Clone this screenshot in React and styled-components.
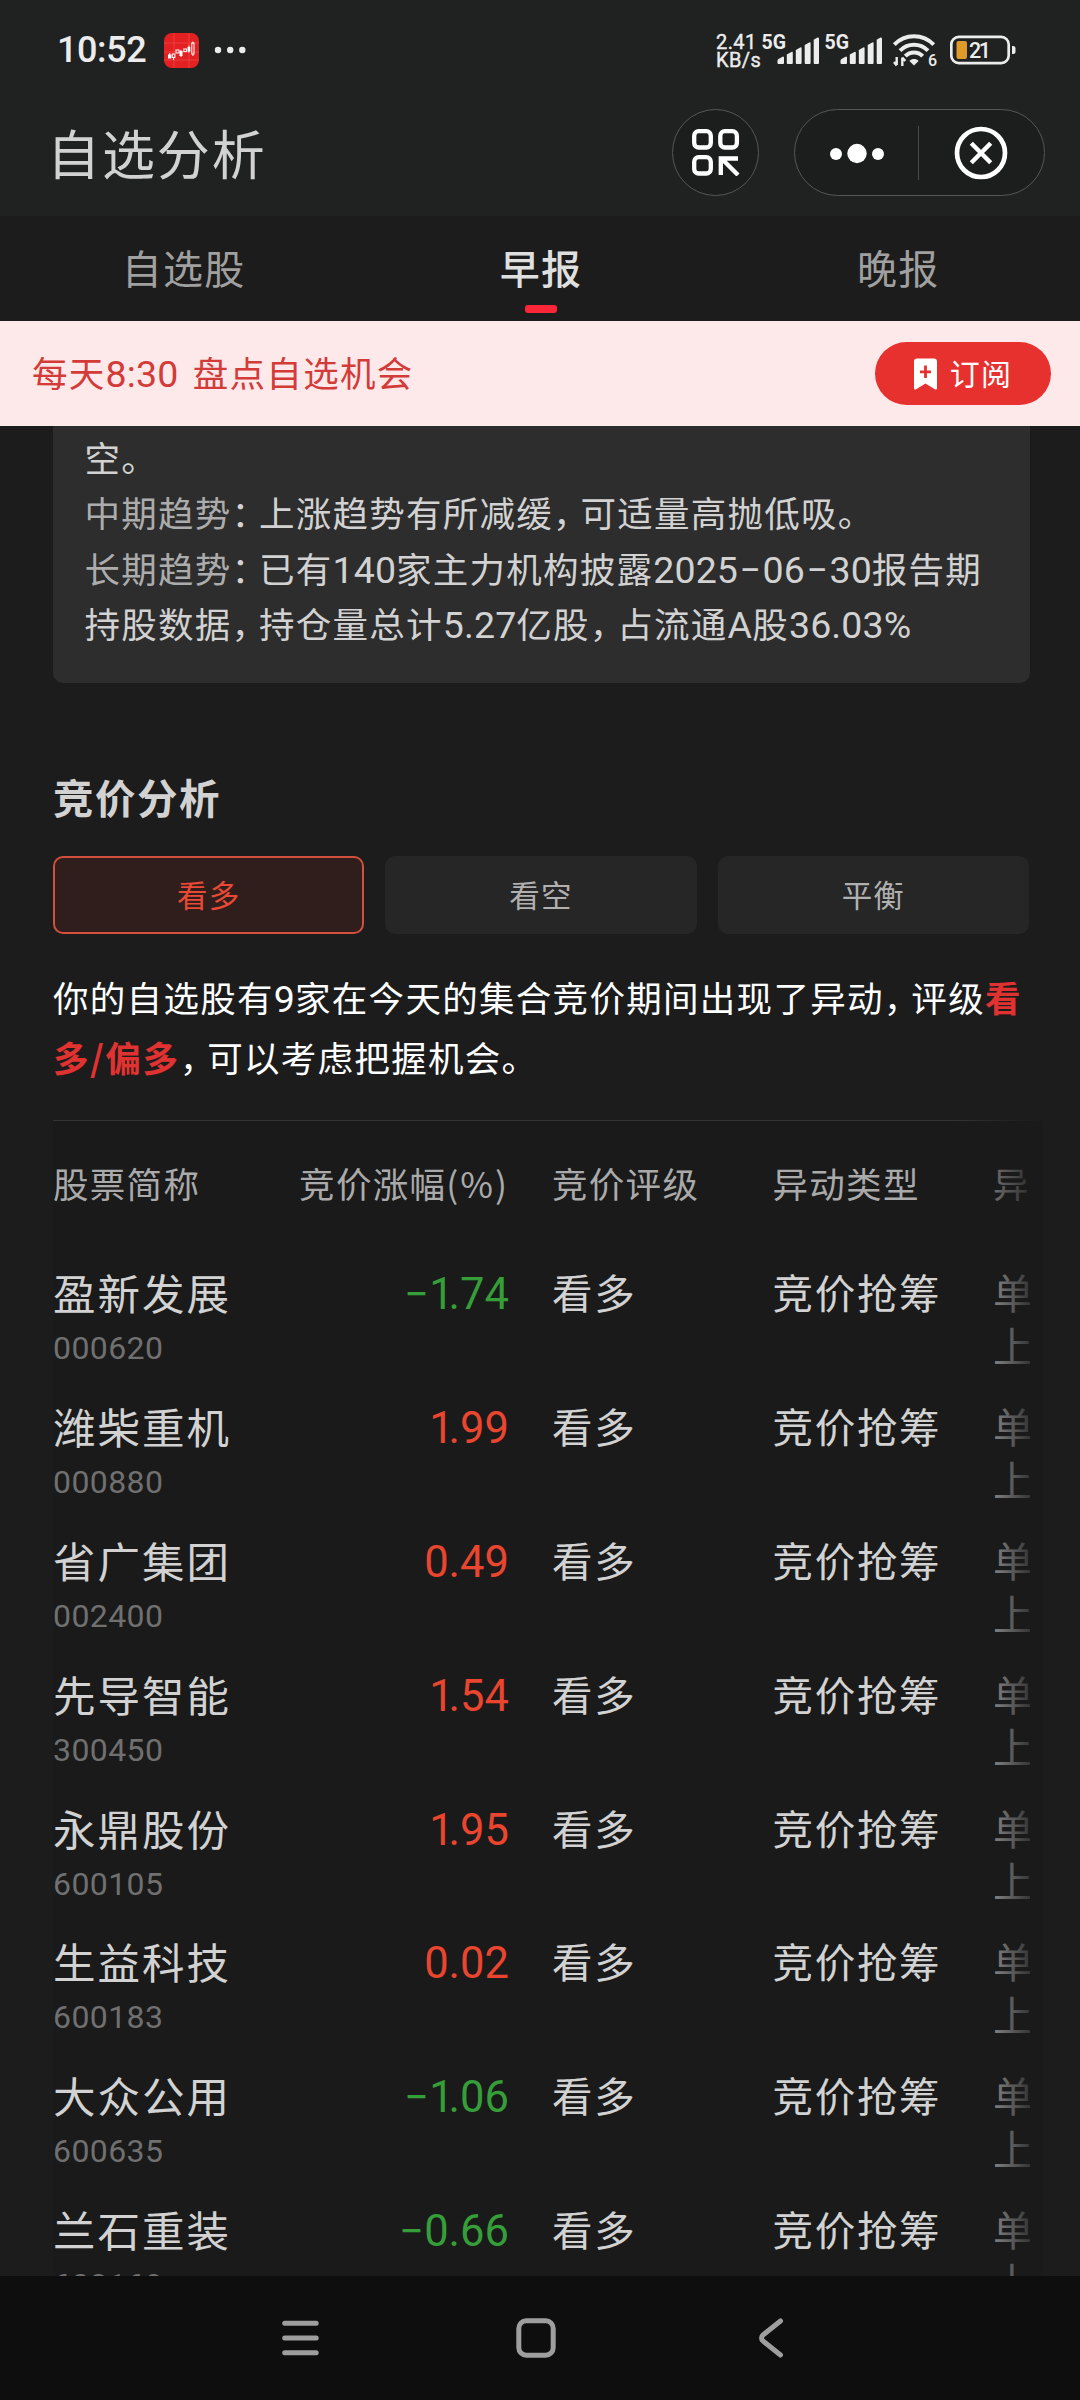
import React from 'react'
import styled, { createGlobalStyle } from 'styled-components'

const GlobalStyle = createGlobalStyle`
  * {
    box-sizing: border-box;
  }
  body {
    margin: 0;
    background: #1c1c1c;
    font-family: "Noto Sans CJK SC", Roboto, sans-serif;
  }
`;

const Screen = styled.div`
  display: flex;
  flex-direction: column;
  width: 1080px;
  height: 2400px;
  overflow: hidden;
  background: #1c1c1c;
`;

const Header = styled.header`
  flex: none;
  height: 216px;
  background: #202221;
`;

const StatusBar = styled.div`
  display: flex;
  align-items: center;
  height: 100px;
  padding: 0 64px 0 57px;
  color: #ececec;
  font-family: Roboto, sans-serif;
`;

const Clock = styled.span`
  width: 107px;
  font-size: 36px;
  font-weight: 500;
  line-height: 40px;
  letter-spacing: -0.4px;
`;

const StatusRight = styled.div`
  display: flex;
  align-items: center;
  margin-left: auto;
`;

const NetSpeed = styled.div`
  width: 46px;
  padding-top: 1px;
  font-size: 20px;
  line-height: 18px;
  letter-spacing: 0.4px;
  -webkit-text-stroke: 0.4px #ececec;
`;

const TitleBar = styled.div`
  display: flex;
  align-items: center;
  height: 87px;
  margin-top: 9px;
  padding: 0 35px 0 47px;
`;

const Title = styled.h1`
  flex: 1;
  margin: 0;
  padding-bottom: 1px;
  color: #d2d2d2;
  font-size: 53px;
  font-weight: 400;
  line-height: 60px;
  letter-spacing: 1.9px;
`;

const RoundButton = styled.button`
  display: flex;
  align-items: center;
  justify-content: center;
  width: 87px;
  height: 87px;
  padding: 0;
  border: 1px solid #555756;
  border-radius: 50%;
  background: #1c1e1d;
`;

const Capsule = styled.div`
  display: flex;
  align-items: center;
  width: 251px;
  height: 87px;
  margin-left: 35px;
  border: 1px solid #555756;
  border-radius: 44px;
  background: #1c1e1d;
`;

const CapsuleItem = styled.div`
  display: flex;
  flex: 1;
  justify-content: center;
  height: 54px;
  align-items: center;
  padding-right: ${props => props.$divided ? '2px' : '0'};
  border-left: ${props => props.$divided ? '1px solid #4a4c4b' : 'none'};
`;

const Tabs = styled.nav`
  flex: none;
  display: grid;
  grid-template-columns: repeat(3, 1fr);
  height: 105px;
  padding: 0 3px 0 5px;
`;

const Tab = styled.div`
  display: flex;
  flex-direction: column;
  align-items: center;
  padding-top: 21px;
  color: ${props => props.$active ? '#dfdfdf' : '#a0a0a0'};
  font-size: 40px;
  font-weight: ${props => props.$active ? 500 : 400};
  line-height: 60px;
  letter-spacing: 1.3px;

  &::after {
    content: "";
    display: ${props => props.$active ? 'block' : 'none'};
    width: 32px;
    height: 8px;
    margin-top: 8px;
    border-radius: 3px;
    background: #fc2639;
  }
`;

const Banner = styled.div`
  flex: none;
  display: flex;
  align-items: center;
  justify-content: space-between;
  height: 105px;
  padding: 0 29px 0 32px;
  background: #fde9ea;
  color: #d33b39;
  font-size: 35.5px;
  line-height: 50px;
  letter-spacing: 1.3px;
`;

const BannerText = styled.span`
  padding-bottom: 4px;
  word-spacing: 5px;
`;

const Subscribe = styled.button`
  display: flex;
  align-items: center;
  justify-content: center;
  gap: 13px;
  width: 176px;
  height: 63px;
  padding: 0;
  border: 0;
  border-radius: 32px;
  background: #e7312f;
  color: #fff;
  font-family: inherit;
  font-size: 30px;
  line-height: 40px;
  letter-spacing: 1.3px;
`;

const SubscribeText = styled.span`
  padding-bottom: 3px;
`;

const Content = styled.main`
  flex: 1;
  min-height: 0;
  overflow: hidden;
  padding: 0 50px 0 53px;
`;

const TrendCard = styled.div`
  height: 257px;
  padding: 3px 31px 0 31.5px;
  border-radius: 0 0 10px 10px;
  background: #2d2d2d;
  color: #d2d2d2;
  font-size: 35.5px;
  line-height: 55.4px;
  letter-spacing: 1.25px;
  white-space: nowrap;
`;

const Label = styled.span`
  color: #acacac;
`;

// latin digits run a bit taller than the chinese text around them
const Num = styled.span`
  font-family: Roboto, sans-serif;
  font-size: 37.5px;
  line-height: 1;
  letter-spacing: 0.1px;
`;

const Dash = styled.span`
  margin: 0 1.5px;
`;

const Punct = styled.span`
  letter-spacing: -8px;
`;

const SectionTitle = styled.h2`
  margin: 84px 0 29px;
  color: #d2d2d2;
  font-size: 40.5px;
  font-weight: 700;
  line-height: 60px;
  letter-spacing: 1.5px;
`;

const Filters = styled.div`
  display: grid;
  grid-template-columns: repeat(3, 1fr);
  gap: 21px;
  margin-right: 1px;
`;

const Filter = styled.button`
  height: 78px;
  padding: 0 0 2px;
  border: 2px solid ${props => props.$active ? '#d2503d' : '#262626'};
  border-radius: 10px;
  background: ${props => props.$active ? '#301e1c' : '#262626'};
  color: ${props => props.$active ? '#e84a35' : '#b0b0b0'};
  font-family: inherit;
  font-size: 30.5px;
  line-height: 44px;
  letter-spacing: 1.2px;
`;

const Summary = styled.p`
  margin: 33px 0 34px;
  color: #fff;
  font-size: 35.5px;
  line-height: 59.7px;
  letter-spacing: 1.3px;
  white-space: nowrap;
`;

const Strong = styled.strong`
  color: #e03331;
  font-weight: 700;
  letter-spacing: 1.6px;
`;

const Table = styled.div`
  position: relative;
  margin-right: -13px;
  border-top: 1px solid #343434;
  background: #1a1a1a;

  &::after {
    content: "";
    position: absolute;
    top: -1px;
    right: 0;
    bottom: 0;
    width: 88px;
    background: linear-gradient(to right, rgba(26, 26, 26, 0), #1a1a1a);
  }
`;

const Row = styled.div`
  display: grid;
  grid-template-columns: 200px 256px 263.5px 220.5px 37px;
  height: 133.8px;
  padding-top: 20px;
  color: #d2d2d2;
  font-size: 40.5px;
  line-height: 54px;
  letter-spacing: 1.7px;
`;

const HeadRow = styled(Row)`
  height: 124px;
  padding-top: 35px;
  color: #aaaaaa;
  font-size: 35.5px;
  letter-spacing: 1.3px;
`;

const Cell = styled.div`
  padding-left: ${props => props.$gap ? '43px' : '0'};
  white-space: nowrap;
`;

const EdgeCell = styled(Cell)`
  overflow: hidden;
  line-height: 52.5px;
  padding-top: 1px;
`;

const HeadValue = styled(Cell)`
  text-align: right;
`;

const Unit = styled.span`
  letter-spacing: 2px;
`;

const StockName = styled.div`
  font-size: 42.5px;
  letter-spacing: 2px;
`;

const StockCode = styled.div`
  margin-top: 12px;
  color: #707070;
  font-family: Roboto, sans-serif;
  font-size: 32px;
  line-height: 34px;
  letter-spacing: 0.4px;
`;

const Change = styled.div`
  padding-top: 3px;
  color: ${props => props.$down ? '#369e38' : '#e9452f'};
  font-family: Roboto, sans-serif;
  font-size: 43.5px;
  letter-spacing: 0;
  text-align: right;
`;

const Tight = styled.span`
  letter-spacing: -5px;
`;

const NavBar = styled.footer`
  flex: none;
  display: flex;
  align-items: center;
  height: 124px;
  padding-left: 282px;
  background: #0e0e0e;
`;

const NavIcon = styled.svg`
  flex: none;
  margin-right: ${props => props.$space || 0}px;
  fill: none;
  stroke: #9e9e9e;
  stroke-width: 5;
  stroke-linecap: round;
  stroke-linejoin: round;
`;

const stocks = [
  { name: '盈新发展', code: '000620', change: '−1.74' },
  { name: '潍柴重机', code: '000880', change: '1.99' },
  { name: '省广集团', code: '002400', change: '0.49' },
  { name: '先导智能', code: '300450', change: '1.54' },
  { name: '永鼎股份', code: '600105', change: '1.95' },
  { name: '生益科技', code: '600183', change: '0.02' },
  { name: '大众公用', code: '600635', change: '−1.06' },
  { name: '兰石重装', code: '603169', change: '−0.66' },
]

const AppIcon = () => (
  <svg width="35" height="35" viewBox="0 0 35 35">
    <rect width="35" height="35" rx="8" fill="#e32122" />
    <path d="M0 10h35M0 19h35M0 27h35M10 0v35M25 0v35" stroke="#ee4a48" strokeWidth="0.7" />
    <g fill="#fff">
      <rect x="4" y="21.5" width="3.4" height="4" />
      <rect x="15.5" y="18" width="3" height="5" />
      <rect x="23.5" y="14" width="2.8" height="4.5" />
    </g>
    <path d="M5.7 20v2M17 17v7M25 12.5v7M9.5 24v3M28.9 8.5v2M28.9 21v2" stroke="#fff" />
    <g fill="none" stroke="#fff">
      <rect x="8.3" y="21" width="2.6" height="3.5" />
      <rect x="12" y="17" width="3" height="3" />
      <rect x="19.8" y="16" width="2.6" height="2.6" />
      <rect x="27.8" y="10" width="2.2" height="11" />
    </g>
  </svg>
)

const Dots = styled.svg`
  width: 34px;
  height: 8px;
  margin-left: 15px;
  fill: #ececec;
`;

const MoreDots = () => (
  <Dots viewBox="0 0 34 8">
    <circle cx="4" cy="4" r="3.2" />
    <circle cx="16.2" cy="4" r="3.2" />
    <circle cx="28.3" cy="4" r="3.2" />
  </Dots>
)

const SignalIcon = styled.svg`
  width: 63px;
  height: 34px;
  overflow: visible;
  fill: #ececec;
`;

const Signal = () => (
  <SignalIcon viewBox="0 0 63 34">
    <text x="-0.5" y="15.5" fontSize="19.5" fontWeight="700">5G</text>
    <path d="M15.5 30v-2.500a2 2 0 0 1 1-1.600l4-2.200a1 1 0 0 1 1.500 1V30a1 1 0 0 1-1 1h-4.500a1 1 0 0 1-1-1z" />
    <path d="M24.8 30V21.500l4.600-2.600a1 1 0 0 1 1.400 1V30a1 1 0 0 1-1 1h-4a1 1 0 0 1-1-1z" />
    <path d="M33.8 30V17l4.400-2.500a1 1 0 0 1 1.400 1V30a1 1 0 0 1-1 1h-3.800a1 1 0 0 1-1-1z" />
    <path d="M42.7 30V12l4.500-2.500a1 1 0 0 1 1.400 1V30a1 1 0 0 1-1 1h-3.900a1 1 0 0 1-1-1z" />
    <path d="M51.7 30V6.800l3.800-2.200a1 1 0 0 1 1.500 1V30a1 1 0 0 1-1 1h-3.300a1 1 0 0 1-1-1z" />
  </SignalIcon>
)

const WifiIcon = styled.svg`
  width: 46px;
  height: 36px;
  margin-left: 4px;
  overflow: visible;
`;

const Wifi = () => (
  <WifiIcon viewBox="0 0 46 36">
    <g fill="none" stroke="#ececec" strokeWidth="4">
      <path d="M2.3 12.6C13 1.4 31 1.4 41.7 12.6" />
      <path d="M8 18.6C16 10.8 28 10.8 36 18.6" />
      <path d="M13.3 24.2C18 19.2 26 19.2 30.7 24.2" />
    </g>
    <path d="M22 33.5l-4.600-4.600c2.600-2.400 6.600-2.400 9.200 0z" fill="#ececec" />
    <path d="M4.7 25v8M2 30l2.700 3.500M10.3 34v-8.500M10.3 25.500l3 3.500" stroke="#ececec" strokeWidth="2.4" fill="none" />
    <text x="36" y="34" fontSize="16" fontWeight="500" fill="#ececec">6</text>
  </WifiIcon>
)

const BatteryIcon = styled.svg`
  width: 66px;
  height: 30px;
  margin-left: 12px;
`;

const Battery = () => (
  <BatteryIcon viewBox="0 0 66 30">
    <rect x="1.3" y="1.9" width="57.4" height="26.2" rx="7.5" fill="none" stroke="#ececec" strokeWidth="2.7" />
    <rect x="6.5" y="6" width="10.5" height="18" rx="2" fill="#e09a28" />
    <path d="M62 11h1a2.500 2.500 0 0 1 2.500 2.500v3a2.500 2.500 0 0 1-2.500 2.500h-1z" fill="#ececec" />
    <text x="19" y="23" fontSize="21.5" fontWeight="500" fill="#ececec" textLength="22">21</text>
  </BatteryIcon>
)

const ScanIcon = () => (
  <svg width="48" height="47" viewBox="0 0 48 47" fill="none" stroke="#fff" strokeWidth="4.3">
    <rect x="2.2" y="2.2" width="16.6" height="16.3" rx="4.5" />
    <rect x="28.3" y="2.2" width="16.6" height="16.3" rx="4.5" />
    <rect x="2.2" y="28.2" width="16.6" height="16.3" rx="4.5" />
    <path d="M28.8 46V29.500H46M29.500 29.500L46 46" />
  </svg>
)

const BookmarkIcon = () => (
  <svg width="23" height="32" viewBox="0 0 23 32">
    <path d="M3 0.5h17a3 3 0 0 1 3 3V30c0 1.400-1.200 2-2.200 1.200L11.500 25.500 2.200 31.200C1.200 32 0 31.400 0 30V3.500a3 3 0 0 1 3-3z" fill="#fff" />
    <path d="M11.5 7.5v12.600M6 13.800h11" stroke="#e7312f" strokeWidth="2.8" />
  </svg>
)

const App = () => {
  return (
    <Screen>
      <GlobalStyle />
      <Header>
        <StatusBar>
          <Clock>10:52</Clock>
          <AppIcon />
          <MoreDots />
          <StatusRight>
            <NetSpeed>2.41<br />KB/s</NetSpeed>
            <Signal />
            <Signal />
            <Wifi />
            <Battery />
          </StatusRight>
        </StatusBar>
        <TitleBar>
          <Title>自选分析</Title>
          <RoundButton><ScanIcon /></RoundButton>
          <Capsule>
            <CapsuleItem>
              <svg width="56" height="22" viewBox="0 0 56 22" fill="#fff">
                <circle cx="7" cy="12" r="6" />
                <circle cx="28" cy="11.5" r="9.7" />
                <circle cx="49" cy="12" r="6" />
              </svg>
            </CapsuleItem>
            <CapsuleItem $divided>
              <svg width="54" height="54" viewBox="0 0 54 54" fill="none" stroke="#fff">
                <circle cx="27" cy="27" r="24" strokeWidth="4.7" />
                <path d="M17.3 17.3l19.400 19.400M36.700 17.3L17.3 36.700" strokeWidth="4.4" />
              </svg>
            </CapsuleItem>
          </Capsule>
        </TitleBar>
      </Header>

      <Tabs>
        <Tab>自选股</Tab>
        <Tab $active>早报</Tab>
        <Tab>晚报</Tab>
      </Tabs>

      <Banner>
        <BannerText>每天<Num>8:30 </Num>盘点自选机会</BannerText>
        <Subscribe>
          <BookmarkIcon />
          <SubscribeText>订阅</SubscribeText>
        </Subscribe>
      </Banner>

      <Content>
        <TrendCard>
          <div>空。</div>
          <div><Label>中期趋势</Label><Punct>：</Punct>上涨趋势有所减缓<Punct>，</Punct>可适量高抛低吸。</div>
          <div><Label>长期趋势</Label><Punct>：</Punct>已有<Num>140</Num>家主力机构披露<Num>2025<Dash>−</Dash>06<Dash>−</Dash>30</Num>报告期</div>
          <div>持股数据<Punct>，</Punct>持仓量总计<Num>5.27</Num>亿股<Punct>，</Punct>占流通<Num>A</Num>股<Num>36.03%</Num></div>
        </TrendCard>

        <SectionTitle>竞价分析</SectionTitle>
        <Filters>
          <Filter $active>看多</Filter>
          <Filter>看空</Filter>
          <Filter>平衡</Filter>
        </Filters>
        <Summary>
          你的自选股有<Num>9</Num>家在今天的集合竞价期间出现了异动<Punct>，</Punct>评级<Strong>看<br />
          多/偏多</Strong><Punct>，</Punct>可以考虑把握机会。
        </Summary>

        <Table>
          <HeadRow>
            <Cell>股票简称</Cell>
            <HeadValue>竞价涨幅<Unit>(%)</Unit></HeadValue>
            <Cell $gap>竞价评级</Cell>
            <Cell>异动类型</Cell>
            <EdgeCell>异</EdgeCell>
          </HeadRow>
          {stocks.map(stock => {
            // a leading 1 sits close to its decimal point
            const [whole, cents] = stock.change.split('.')
            return (
              <Row key={stock.code}>
                <Cell>
                  <StockName>{stock.name}</StockName>
                  <StockCode>{stock.code}</StockCode>
                </Cell>
                <Change $down={whole.startsWith('−')}>
                  {whole.replace('1', '')}
                  {whole.endsWith('1') && <Tight>1</Tight>}
                  .{cents}
                </Change>
                <Cell $gap>看多</Cell>
                <Cell>竞价抢筹</Cell>
                <EdgeCell>单<br />上</EdgeCell>
              </Row>
            )
          })}
        </Table>
      </Content>

      <NavBar>
        <NavIcon $space={197} width="37" height="40" viewBox="0 0 37 40">
          <path d="M2.7 5.3h31.500M2.7 20h31.500M2.7 34.700h31.500" />
        </NavIcon>
        <NavIcon $space={203} width="40" height="40" viewBox="0 0 40 40">
          <rect x="2.8" y="2.8" width="34.4" height="34.4" rx="7.5" />
        </NavIcon>
        <NavIcon width="25" height="40" viewBox="0 0 25 40">
          <path d="M21.5 3L4 17a3.800 3.800 0 0 0 0 6L21.5 37" />
        </NavIcon>
      </NavBar>
    </Screen>
  )
}

export default App
